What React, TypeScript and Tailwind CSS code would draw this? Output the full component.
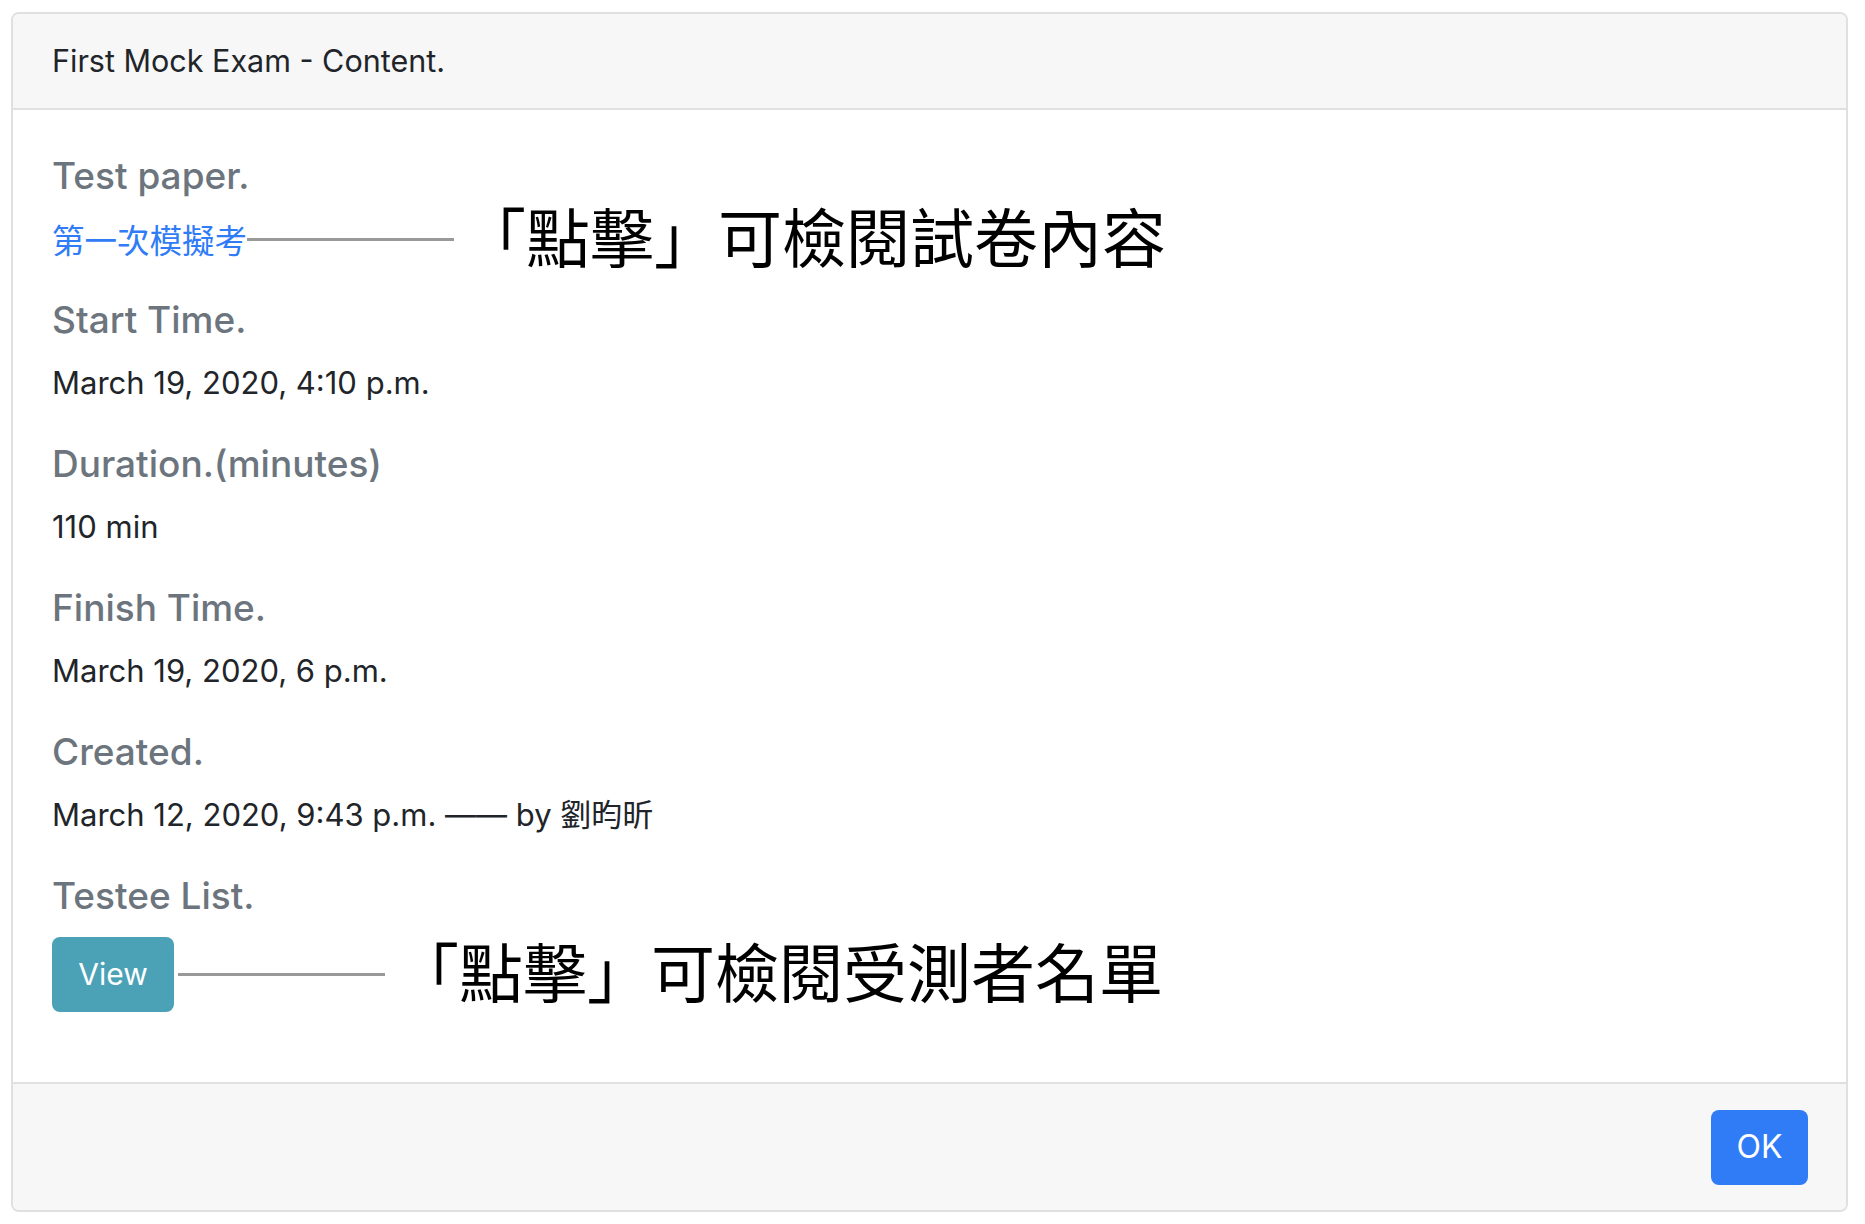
export default function App() {
  const rows = [
    { label: 'Start Time.', value: 'March 19, 2020, 4:10 p.m.' },
    { label: 'Duration.(minutes)', value: '110 min' },
    { label: 'Finish Time.', value: 'March 19, 2020, 6 p.m.' },
    { label: 'Created.', value: 'March 12, 2020, 9:43 p.m. —— by 劉昀昕' },
  ];

  return (
    <div className="min-h-screen bg-white pl-[11px] pr-[17px] pt-[12px] pb-[13px] font-['Inter','Noto_Sans_CJK_TC',sans-serif]">
      <div className="w-[1837px] h-[1200px] border-2 border-[#e0e0e0] rounded-[8px] overflow-hidden flex flex-col">
        {/* Header */}
        <div className="h-[96px] shrink-0 bg-[#f7f7f7] border-b-2 border-[#e0e0e0] flex items-center pl-[39px]">
          <h5 className="text-[30.5px] text-[#212529]">First Mock Exam - Content.</h5>
        </div>

        {/* Body */}
        <div className="flex-1 pl-[39px] pt-[43px]">
          <div className="h-[46px] leading-[46px] text-[37px] font-medium text-[#6c757d]">Test paper.</div>
          <div className="mt-[16px] mb-[34px] h-[48px] flex items-center">
            <a href="#" className="text-[32.5px] leading-[48px] text-[#2f7cf6] font-['Noto_Sans_CJK_TC',sans-serif]">
              第一次模擬考
            </a>
            <div className="w-[207px] h-[3px] bg-[#999999]" />
            <span className="ml-[8px] mb-[10px] text-[64px] leading-[48px] text-black font-['Noto_Sans_CJK_TC',sans-serif]">
              「點擊」可檢閱試卷內容
            </span>
          </div>

          {rows.map((r) => (
            <div key={r.label}>
              <div className="h-[46px] leading-[46px] text-[37px] font-medium text-[#6c757d]">{r.label}</div>
              <div className="mt-[16px] mb-[34px] h-[48px] leading-[48px] text-[31px] text-[#212529]">{r.value}</div>
            </div>
          ))}

          <div className="h-[46px] leading-[46px] text-[37px] font-medium text-[#6c757d]">Testee List.</div>
          <div className="mt-[18px] h-[75px] flex items-center">
            <button className="w-[122px] h-[75px] rounded-[8px] bg-[#4ba1b5] text-white text-[30px]">View</button>
            <div className="ml-[4px] w-[207px] h-[3px] bg-[#999999]" />
            <span className="ml-[10px] mb-[12px] text-[64px] leading-[62px] text-black font-['Noto_Sans_CJK_TC',sans-serif]">
              「點擊」可檢閱受測者名單
            </span>
          </div>
        </div>

        {/* Footer */}
        <div className="h-[128px] shrink-0 bg-[#f7f7f7] border-t-2 border-[#e0e0e0] flex items-center justify-end pr-[38px]">
          <button className="w-[97px] h-[75px] rounded-[8px] bg-[#2f7cf6] text-white text-[32px]">OK</button>
        </div>
      </div>
    </div>
  );
}
